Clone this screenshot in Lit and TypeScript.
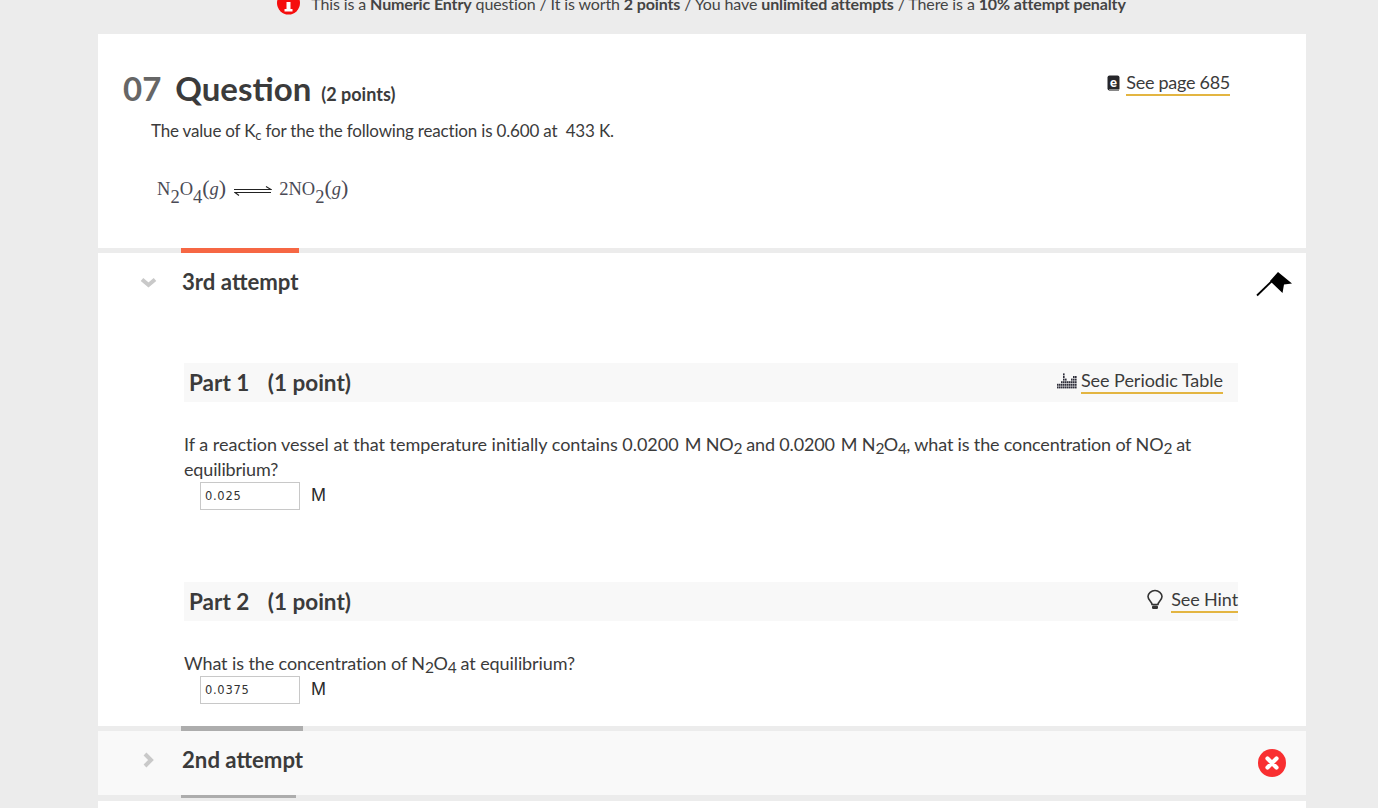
import { LitElement, html, css, svg } from "lit";
import { customElement } from "lit/decorators.js";

const periodic = () => {
  const heights = [2, 2, 3, 6, 4, 3, 3, 4, 5, 5];
  const cells = [];
  for (let c = 0; c < heights.length; c++) {
    for (let r = 0; r < heights[c]; r++) {
      cells.push(svg`<rect x=${c * 2} y=${16 - (r + 1) * 2.6} width="1.6" height="2" fill="#2e2e3a"></rect>`);
    }
  }
  return html`<svg class="ic" width="20" height="17" viewBox="0 0 20 17">${cells}</svg>`;
};

@customElement("app-root")
export class AppRoot extends LitElement {
  static styles = css`
    :host {
      display: block;
      height: 808px;
      overflow: hidden;
      background: #ececec;
      font-family: Lato, "Noto Sans", sans-serif;
      color: #3b3b3b;
    }
    .notice {
      height: 34px;
      display: flex;
      justify-content: center;
      align-items: flex-start;
      gap: 11px;
      font-size: 16px;
      line-height: 20px;
      letter-spacing: -0.12px;
      color: #444;
      overflow: hidden;
      padding-left: 25px;
    }
    .notice svg { margin-top: -9px; flex: none; }
    .notice span { margin-top: -6px; }
    .notice b { font-weight: 700; }
    .col {
      width: 1208px;
      margin-left: 98px;
    }
    .card {
      background: #fff;
      height: 214px;
      padding: 0 76px 0 25px;
      box-sizing: border-box;
    }
    .head {
      display: flex;
      justify-content: space-between;
      align-items: flex-start;
      padding-top: 34px;
      height: 81px;
      box-sizing: border-box;
    }
    .title { display: flex; align-items: baseline; font-weight: 700; font-size: 33px; line-height: 40px; }
    .num { color: #666; margin-right: 14px; }
    .pts { font-size: 18px; margin-left: 10px; font-weight: 700; }
    .link-wrap { display: flex; align-items: center; gap: 5px; }
    .link {
      font-size: 18px;
      line-height: 24px;
      letter-spacing: -0.1px;
      color: #3b3b3b;
      border-bottom: 2px solid #e3b541;
    }
    .page-link { padding-top: 2px; gap: 6px; }
    .page-link .link { letter-spacing: -0.28px; }
    .body-text {
      font-size: 17px;
      line-height: 26px;
      margin: 0 0 0 28px;
      letter-spacing: -0.18px;
      padding-top: 3px;
    }
    .body-text sub { font-size: 13px; line-height: 0; vertical-align: -3px; }
    .formula {
      display: flex;
      align-items: center;
      margin: 33px 0 0 34px;
      font-family: "Liberation Serif", serif;
      font-size: 18.5px;
      line-height: 24px;
      color: #4a4a55;
    }
    .formula sub { font-size: 18.5px; line-height: 0; vertical-align: -8px; }
    .formula i { font-style: italic; }
    .formula .paren { font-size: 22px; line-height: 0; }
    .formula svg { margin: 3px 7px 0 8px; }
    .tab {
      display: block;
      height: 5px;
      margin-left: 83px;
    }
    .tab.orange { width: 118px; background: #f66744; }
    .tab.gray { width: 122px; background: #adadad; }
    .tab.thin { width: 115px; height: 3px; background: #adadad; margin-bottom: 3px; }
    .attempt {
      background: #fff;
      height: 473px;
      box-sizing: border-box;
    }
    .attempt.closed { background: #f9f9f9; height: 64px; }
    .a-head {
      display: flex;
      align-items: center;
      height: 58px;
      padding: 0 14px 0 40px;
    }
    .chev { width: 20px; display: flex; justify-content: center; flex: none; }
    .a-title { font-size: 22.2px; font-weight: 700; margin: 0 0 0 24px; flex: 1; line-height: 28px; }
    .flag { margin-top: 3px; }
    .cross { margin: 6px 5px 0 0; }
    .part { margin: 52px 68px 0 86px; }
    .part + .part { margin-top: 72px; }
    .bar {
      display: flex;
      justify-content: space-between;
      background: #f8f8f8;
      height: 39px;
      padding-left: 5px;
      align-items: flex-start;
    }
    .bar h3 {
      margin: 0;
      font-size: 22.5px;
      font-weight: 700;
      line-height: 39px;
    }
    .bar h3 span { margin-left: 13px; }
    .bar .link-wrap { padding-top: 5px; }
    .bar .table-link { gap: 4px; margin-right: 15px; }
    .table-link .link { letter-spacing: -0.03px; }
    .ic { flex: none; }
    .q {
      font-size: 18px;
      line-height: 25px;
      margin: 30px 0 0;
      letter-spacing: -0.1px;
    }
    .q.long { letter-spacing: -0.16px; }
    .q .wide { letter-spacing: -0.02px; }
    .q .gap { display: inline-block; width: 6px; }
    .q sub { font-size: 15.5px; line-height: 0; vertical-align: -3px; margin-right: -0.5px; }
    .answer { display: flex; align-items: center; gap: 11px; margin: 0 0 0 16px; }
    .box {
      width: 100px;
      height: 28px;
      box-sizing: border-box;
      border: 1px solid #c8c8c8;
      background: #fff;
      font-family: "DejaVu Sans", sans-serif;
      font-size: 11.5px;
      letter-spacing: 0.7px;
      color: #333;
      line-height: 26px;
      padding-left: 4px;
    }
    .unit { font-family: "Liberation Sans", sans-serif; font-size: 18px; color: #2a2a2a; margin-top: -2px; }
    .rest { background: #fff; height: 20px; }
  `;

  render() {
    return html`
      <div class="notice">
        <svg width="23" height="24" viewBox="0 0 23 24">
          <circle cx="11.5" cy="12" r="11.5" fill="#f50d0d"></circle>
          <rect x="9.5" y="11" width="4" height="7" fill="#fff"></rect>
          <rect x="7.5" y="18" width="8" height="2.5" fill="#fff"></rect>
        </svg>
        <span>This is a <b>Numeric Entry</b> question / It is worth <b>2 points</b> / You have <b>unlimited attempts</b> / There is a <b>10% attempt penalty</b></span>
      </div>
      <div class="col">
        <section class="card">
          <div class="head">
            <div class="title"><span class="num">07</span><span>Question</span><span class="pts">(2 points)</span></div>
            <div class="link-wrap page-link">
              <svg class="ic" width="13" height="17" viewBox="0 0 13 17">
                <rect x="0.5" y="0.5" width="12" height="15" rx="2" fill="#26262a"></rect>
                <rect x="2" y="14" width="10" height="2" fill="#888"></rect>
                <text x="6.4" y="11.5" text-anchor="middle" font-family="Lato" font-weight="900" font-size="13" fill="#fff">e</text>
              </svg>
              <span class="link">See page 685</span>
            </div>
          </div>
          <p class="body-text">The value of K<sub>c</sub> for the the following reaction is 0.600 at&nbsp; 433 K.</p>
          <div class="formula">
            <span>N<sub>2</sub>O<sub>4</sub><span class="paren">(</span><i>g</i><span class="paren">)</span></span>
            <svg width="38" height="10" viewBox="0 0 38 10">
              <path d="M0 3.5H37L32 0.5M37 6.5H1L5 9.5" fill="none" stroke="#222" stroke-width="1.1"></path>
            </svg>
            <span>2NO<sub>2</sub><span class="paren">(</span><i>g</i><span class="paren">)</span></span>
          </div>
        </section>
        <div class="tab orange"></div>
        <section class="attempt">
          <div class="a-head">
            <span class="chev">
              <svg width="17" height="11" viewBox="0 0 17 11"><path d="M2 2.5L8.5 8L15 2.5" fill="none" stroke="#c9c9c9" stroke-width="4"></path></svg>
            </span>
            <span class="a-title">3rd attempt</span>
            <svg class="flag" width="36" height="26" viewBox="0 0 36 26">
              <path d="M1 24.5L15.5 10.5" stroke="#000" stroke-width="1.8" fill="none"></path>
              <path d="M14 10L22 1L36 12.5L28 13.5L26.5 22Z" fill="#000"></path>
            </svg>
          </div>
          <div class="part first">
            <div class="bar">
              <h3>Part 1 <span>(1 point)</span></h3>
              <div class="link-wrap table-link">${periodic()}<span class="link">See Periodic Table</span></div>
            </div>
            <p class="q long"><span class="wide">If a reaction vessel at that temperature initially contains 0.0200</span><span class="gap"></span>M NO<sub>2</sub> and 0.0200<span class="gap"></span>M N<sub>2</sub>O<sub>4</sub>, what is the concentration of NO<sub>2</sub> at equilibrium?</p>
            <div class="answer"><div class="box">0.025</div><span class="unit">M</span></div>
          </div>
          <div class="part second">
            <div class="bar">
              <h3>Part 2 <span>(1 point)</span></h3>
              <div class="link-wrap">
                <svg class="ic" width="19" height="22" viewBox="0 0 19 22">
                  <path d="M5 15.5C4.8 12.5 1 11.3 1 7.6C1 4.2 4.4 1.5 8 1.5C11.6 1.5 15 4.2 15 7.6C15 11.3 11.2 12.5 11 15.5Z" fill="none" stroke="#333" stroke-width="1.6"></path>
                  <rect x="5" y="16.5" width="6" height="3.5" rx="1.2" fill="#333"></rect>
                </svg>
                <span class="link">See Hint</span>
              </div>
            </div>
            <p class="q">What is the concentration of N<sub>2</sub>O<sub>4</sub> at equilibrium?</p>
            <div class="answer"><div class="box">0.0375</div><span class="unit">M</span></div>
          </div>
        </section>
        <div class="tab gray"></div>
        <section class="attempt closed">
          <div class="a-head">
            <span class="chev">
              <svg width="12" height="16" viewBox="0 0 12 16"><path d="M3 2L9 8L3 14" fill="none" stroke="#c9c9c9" stroke-width="4"></path></svg>
            </span>
            <span class="a-title">2nd attempt</span>
            <svg class="cross" width="30" height="30" viewBox="0 0 30 30">
              <circle cx="15" cy="15" r="14" fill="#f92f31"></circle>
              <path d="M10.5 10.5L19.5 19.5M19.5 10.5L10.5 19.5" stroke="#fff" stroke-width="4.2" stroke-linecap="round"></path>
            </svg>
          </div>
        </section>
        <div class="tab thin"></div>
        <div class="rest"></div>
      </div>
    `;
  }
}
